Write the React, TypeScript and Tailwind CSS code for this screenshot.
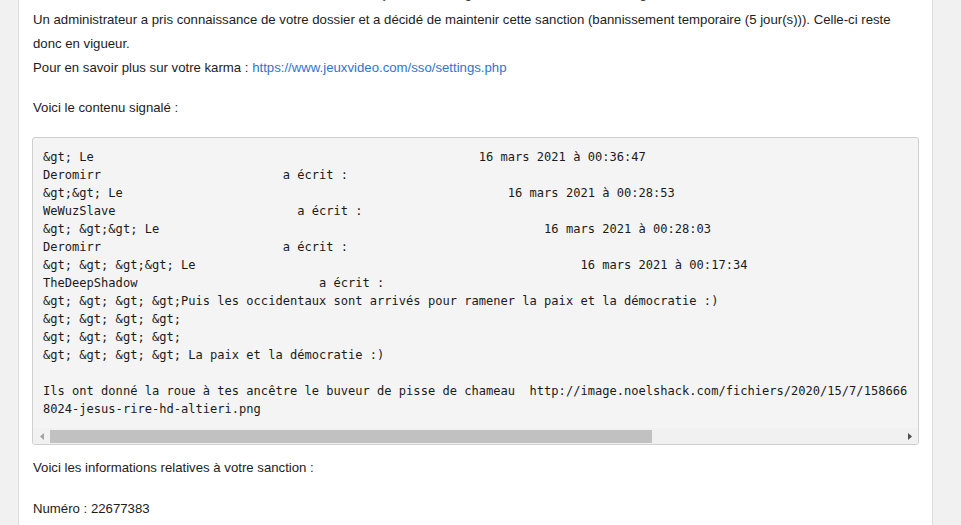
import React from "react";

const pad = (s: string, col: number) => s + " ".repeat(Math.max(1, col - s.length));

const lines: string[] = [
  pad("&gt; Le", 60) + "16 mars 2021 à 00:36:47",
  pad("Deromirr", 33) + "a écrit :",
  pad("&gt;&gt; Le", 64) + "16 mars 2021 à 00:28:53",
  pad("WeWuzSlave", 35) + "a écrit :",
  pad("&gt; &gt;&gt; Le", 69) + "16 mars 2021 à 00:28:03",
  pad("Deromirr", 33) + "a écrit :",
  pad("&gt; &gt; &gt;&gt; Le", 74) + "16 mars 2021 à 00:17:34",
  pad("TheDeepShadow", 38) + "a écrit :",
  "&gt; &gt; &gt; &gt;Puis les occidentaux sont arrivés pour ramener la paix et la démocratie :)",
  "&gt; &gt; &gt; &gt;",
  "&gt; &gt; &gt; &gt;",
  "&gt; &gt; &gt; &gt; La paix et la démocratie :)",
  " ",
  "Ils ont donné la roue à tes ancêtre le buveur de pisse de chameau  http://image.noelshack.com/fichiers/2020/15/7/158666",
  "8024-jesus-rire-hd-altieri.png",
];

export default function App() {
  return (
    <div className="flex h-[525px] w-[961px] overflow-hidden bg-[#f1f1f1]">
      <div className="w-[19px] shrink-0 border-r border-[#dcdcdc]" />
      <div
        className="w-[914px] shrink-0 border-r border-[#dcdcdc] bg-white px-[13px] text-[13.2px] leading-[24px] text-[#1c1c1c]"
        style={{ fontFamily: '"Liberation Sans", Arial, sans-serif' }}
      >
        <div className="-mt-[18px]">
          <div className="whitespace-nowrap pl-[1px]">
            Vous avez fait une demande de réexamen de la sanction reçue suite au signalement d'un de vos messages.
          </div>
          <div className="mt-[2px] pl-[1px]">
            Un administrateur a pris connaissance de votre dossier et a décidé de maintenir cette sanction (bannissement temporaire (5 jour(s))). Celle-ci reste donc en vigueur.
          </div>
          <div className="pl-[1px]">
            Pour en savoir plus sur votre karma :{" "}
            <span className="text-[#2f74d0]">https://www.jeuxvideo.com/sso/settings.php</span>
          </div>
          <div className="mt-[16px] pl-[1px]">Voici le contenu signalé :</div>
        </div>

        <div className="mt-[17px] overflow-hidden rounded-[3px] border border-[#cfcfcf] bg-[#f4f4f4]">
          <div
            className="whitespace-pre pb-[10px] pl-[10px] pt-[10px] text-[12.07px] leading-[18px] text-[#1a1a1a]"
            style={{ fontFamily: '"DejaVu Sans Mono", monospace' }}
          >
            {lines.map((l, i) => (
              <div key={i} className="h-[18px]">
                {l}
              </div>
            ))}
          </div>
          <div className="flex h-[16px] items-start bg-[#f1f1f1]">
            <div className="flex h-[16px] w-[17px] shrink-0 items-center justify-center">
              <svg width="4" height="7" viewBox="0 0 4 7">
                <path d="M4 0 L0 3.5 L4 7 Z" fill="#a3a3a3" />
              </svg>
            </div>
            <div className="mt-[2px] h-[13px] w-[602px] bg-[#c1c1c1]" />
            <div className="flex-1" />
            <div className="flex h-[16px] w-[17px] shrink-0 items-center justify-center">
              <svg width="4" height="7" viewBox="0 0 4 7">
                <path d="M0 0 L4 3.5 L0 7 Z" fill="#505050" />
              </svg>
            </div>
          </div>
        </div>

        <div className="mt-[11px] pl-[1px]">Voici les informations relatives à votre sanction :</div>
        <div className="mt-[17px] pl-[1px]">Numéro : 22677383</div>
      </div>
      <div className="flex-1" />
    </div>
  );
}
